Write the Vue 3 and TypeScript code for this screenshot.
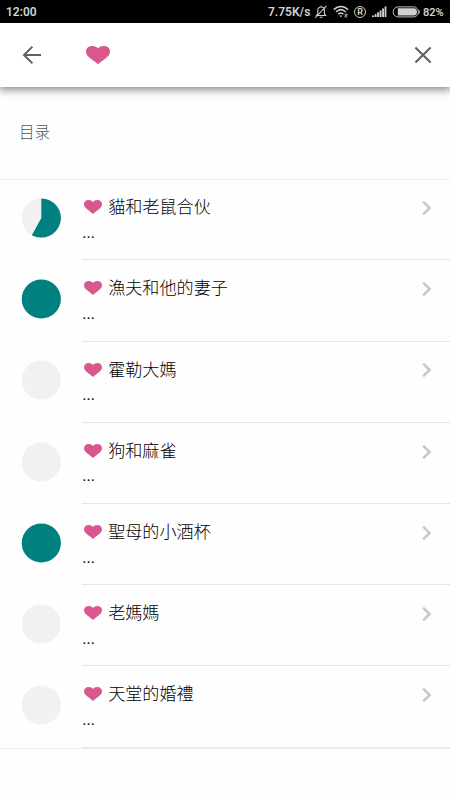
<script setup lang="ts">
interface Story {
  title: string
  progress: number
}

const stories: Story[] = [
  { title: '貓和老鼠合伙', progress: 58 },
  { title: '漁夫和他的妻子', progress: 100 },
  { title: '霍勒大媽', progress: 0 },
  { title: '狗和麻雀', progress: 0 },
  { title: '聖母的小酒杯', progress: 100 },
  { title: '老媽媽', progress: 0 },
  { title: '天堂的婚禮', progress: 0 },
]

const RADIUS = 19.6

function slicePath(percent: number): string {
  const angle = (percent / 100) * Math.PI * 2
  const x = 20.3 + RADIUS * Math.sin(angle)
  const y = 20 - RADIUS * Math.cos(angle)
  const large = percent > 50 ? 1 : 0
  return `M20.3 20V${20 - RADIUS}A${RADIUS} ${RADIUS} 0 ${large} 1 ${x} ${y}Z`
}

const heartPath =
  'M12 18.4C9.6 15.9 6.6 14.4 3.7 11.8C1.2 9.6 0 8.1 0 5.6C0 2.2 2.6 0 6.2 0C8.8 0 11 1 12 2.6C13 1 15.2 0 17.8 0C21.4 0 24 2.2 24 5.6C24 8.1 22.8 9.6 20.3 11.8C17.4 14.4 14.4 15.9 12 18.4Z'
</script>

<template>
  <div class="screen">
    <div class="status">
      <span class="time">12:00</span>
      <span class="speed">7.75K/s</span>
      <svg class="bell" viewBox="0 0 14 14" fill="none" stroke="#cecece" stroke-width="1.1">
        <path d="M2.5 10.5H11.7L10.4 8.8V5.5C10.4 3.3 9 2 7.1 2S3.8 3.3 3.8 5.5V8.8L2.5 10.5ZM5.7 12.3H8.5M7.1 .8V2M12.4 .8L1.2 13" />
      </svg>
      <svg class="wifi" viewBox="0 0 16 13" fill="none" stroke="#cecece" stroke-width="1.5">
        <path d="M.8 4.6C5 .4 10.8 .4 15 4.6M3 7C6 4.1 9.8 4.1 12.8 7M5.2 9.2C7 7.5 8.8 7.5 10.4 9.2" />
        <path d="M6.2 10.5L7.9 12.3L9.4 10.5Z" fill="#cecece" stroke="none" />
        <path d="M11.5 9.2H14V10.6H12V12H14.3" stroke-width=".8" />
      </svg>
      <span class="registered">R</span>
      <svg class="signal" viewBox="0 0 15 12" fill="#cecece">
        <path d="M0 9.6H2V11H0ZM2.6 8H4.5V11H2.6ZM5.1 6.2H7V11H5.1ZM7.6 4.4H9.5V11H7.6ZM10.1 2.6H12V11H10.1ZM12.6 .6H14.4V11H12.6Z" />
      </svg>
      <svg class="battery" viewBox="0 0 28 12">
        <rect x="1.2" y=".9" width="25.2" height="10" rx="4.8" fill="none" stroke="#bdbdbd" />
        <path d="M5.8 2.3H22C24 2.3 25 4 25 5.9S24 9.5 22 9.5H5.8Z" fill="#d0d0d0" />
        <rect x="26.5" y="4.2" width="1.2" height="3.4" fill="#bdbdbd" />
      </svg>
      <span class="level">82%</span>
    </div>

    <header class="toolbar">
      <svg class="back" viewBox="0 0 20 20" fill="none" stroke="#616161" stroke-width="2">
        <path d="M19 10H2M10.4 1.6L2 10L10.4 18.4" />
      </svg>
      <svg class="heart large" viewBox="0 0 24 18.4" preserveAspectRatio="none"><path :d="heartPath" /></svg>
      <svg class="close" viewBox="0 0 18 18" fill="none" stroke="#616161" stroke-width="2.1">
        <path d="M1.4 1.4L16.6 16.6M16.6 1.4L1.4 16.6" />
      </svg>
    </header>

    <h1 class="heading">目录</h1>

    <ul class="list">
      <li v-for="story in stories" :key="story.title" class="row">
        <svg class="pie" viewBox="0 0 40 40">
          <circle cx="20.3" cy="20" :r="RADIUS" :fill="story.progress === 100 ? '#008080' : '#f1f1f1'" />
          <path v-if="story.progress > 0 && story.progress < 100" :d="slicePath(story.progress)" fill="#008080" />
        </svg>
        <div class="body">
          <div class="text">
            <div class="title">
              <svg class="heart" viewBox="0 0 24 18.4" preserveAspectRatio="none"><path :d="heartPath" /></svg>
              <span class="name">{{ story.title }}</span>
            </div>
            <div class="excerpt">...</div>
          </div>
          <svg class="chevron" viewBox="0 0 10 16" fill="none" stroke="#c7c7cc" stroke-width="2.5">
            <path d="M1.1 1.6L7.6 8L1.1 14.4" />
          </svg>
        </div>
      </li>
    </ul>
  </div>
</template>

<style>
body {
  margin: 0;
  background: #fff;
}
</style>

<style scoped>
.screen {
  width: 450px;
  height: 800px;
  overflow: hidden;
  background: #fefefe;
  color: #000;
  font-family: Roboto, 'Noto Sans CJK SC', sans-serif;
}
.status {
  display: flex;
  align-items: center;
  box-sizing: border-box;
  height: 23px;
  padding: 0 6px;
  background: #000;
  color: #d2d2d2;
  font-size: 12px;
  font-weight: 600;
  line-height: 23px;
}
.status svg {
  flex: none;
}
.time,
.speed,
.level {
  padding-top: 1px;
}
.time {
  flex: 1;
}
.speed {
  width: 42px;
  margin-right: 4px;
  white-space: nowrap;
}
.bell {
  width: 14px;
  height: 14px;
  margin-right: 5px;
}
.wifi {
  width: 16px;
  height: 13px;
  margin-right: 5px;
}
.registered {
  box-sizing: border-box;
  width: 12px;
  height: 12px;
  margin-right: 6px;
  border: 1px solid #cecece;
  border-radius: 50%;
  font-size: 9px;
  font-weight: 600;
  line-height: 10px;
  text-align: center;
}
.signal {
  width: 15px;
  height: 12px;
  margin-right: 5px;
}
.battery {
  width: 28px;
  height: 12px;
  margin-right: 3px;
}
.level {
  width: 21px;
  font-size: 11px;
  white-space: nowrap;
}
.toolbar {
  display: flex;
  align-items: center;
  box-sizing: border-box;
  height: 64px;
  padding: 0 18px 0 22px;
  background: #fff;
  box-shadow: 0 2px 8px 1px rgba(0, 0, 0, 0.46);
}
.back {
  width: 20px;
  height: 20px;
}
.close {
  width: 18px;
  height: 18px;
  margin-left: auto;
}
.heart {
  flex: none;
  width: 18px;
  height: 14px;
  fill: #d8588d;
}
.heart.large {
  width: 24px;
  height: 18.4px;
  margin-left: 44px;
}
.heading {
  box-sizing: border-box;
  height: 91.8px;
  margin: 0;
  padding: 34px 19px 0;
  color: #555;
  font-size: 15.5px;
  font-weight: 300;
  line-height: 24px;
}
.list {
  margin: 0;
  padding: 0;
  border-top: 1px solid #efefef;
  border-bottom: 1px solid #efefef;
  list-style: none;
}
.row {
  display: flex;
  height: 81.2px;
}
.pie {
  flex: none;
  width: 40px;
  height: 40px;
  margin: 18.2px 20.8px 0 21.4px;
}
.body {
  display: flex;
  flex: 1;
  justify-content: space-between;
  box-sizing: border-box;
  height: 80.6px;
  padding-right: 17.6px;
  border-bottom: 1px solid #e5e5e5;
}
.title {
  display: flex;
  align-items: center;
  gap: 6px;
  height: 24px;
  margin-top: 15.4px;
  padding-left: 2px;
  font-family: 'Noto Sans CJK TC', sans-serif;
  font-size: 17.1px;
  font-weight: 300;
  line-height: 24px;
}
.name {
  padding-bottom: 2px;
}
.excerpt {
  margin-top: 3.6px;
  font-size: 16px;
  line-height: 19px;
}
.chevron {
  width: 10px;
  height: 16px;
  margin-top: 20.3px;
}
</style>
